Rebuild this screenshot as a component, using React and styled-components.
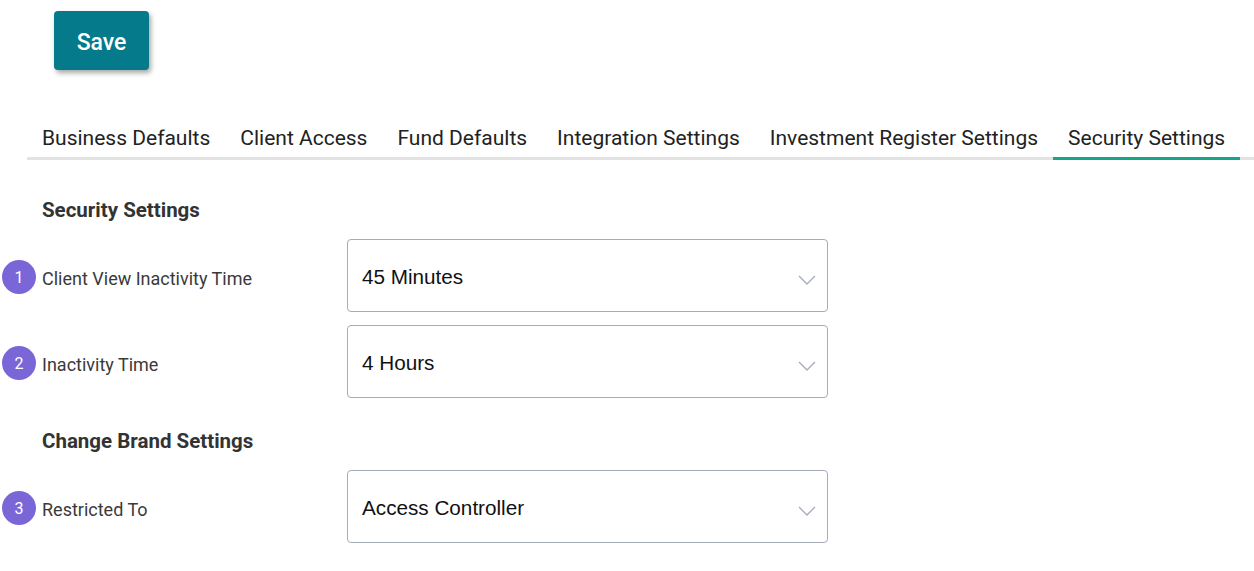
import React from "react"
import styled, { createGlobalStyle } from "styled-components"

const TABS = [
  "Business Defaults",
  "Client Access",
  "Fund Defaults",
  "Integration Settings",
  "Investment Register Settings",
  "Security Settings",
]

const GlobalStyle = createGlobalStyle`
  body {
    margin: 0;
    background: #fff;
    font-family: Roboto, "Noto Sans", sans-serif;
  }
`

const Page = styled.div`
  width: 1254px;
  height: 571px;
  overflow: hidden;
`

const Toolbar = styled.div`
  padding: 11px 0 0 54px;
`

const SaveButton = styled.button`
  width: 95px;
  height: 59px;
  padding: 4px 0 0;
  border: none;
  border-radius: 4px;
  background: #047a8b;
  color: #fff;
  font-family: Roboto, sans-serif;
  font-size: 23px;
  font-weight: 500;
  box-shadow: 2px 3px 5px rgba(0, 0, 0, 0.35);
  cursor: pointer;
`

const TabBar = styled.div`
  display: flex;
  margin: 46px 0 0 27px;
  border-bottom: 3px solid #e3e3e3;
`

const Tab = styled.div`
  padding: 10px 15px 7px;
  margin-bottom: -3px;
  font-size: 21px;
  line-height: 24px;
  color: #222;
  white-space: nowrap;
  border-bottom: 3px solid ${(p) => (p.$active ? "#17a488" : "transparent")};
`

const Section = styled.div`
  margin-top: ${(p) => p.$top}px;
`

const Heading = styled.h3`
  margin: 0 0 17px 42px;
  font-size: 20.5px;
  line-height: 24px;
  font-weight: 700;
  color: #333;
`

const Rows = styled.div`
  display: flex;
  flex-direction: column;
  gap: 13px;
`

const Row = styled.div`
  display: flex;
  align-items: center;
`

const Lead = styled.div`
  display: flex;
  align-items: center;
  width: 347px;
  padding-top: 5px;
`

const Badge = styled.span`
  flex: none;
  width: 34px;
  height: 34px;
  margin: -2px 6px 0 2px;
  border-radius: 50%;
  background: #7b66d7;
  color: #fff;
  font-size: 16px;
  display: flex;
  align-items: center;
  justify-content: center;
`

const Label = styled.span`
  font-size: 18px;
  color: #3a3a3a;
`

const Select = styled.div`
  width: 481px;
  height: 73px;
  box-sizing: border-box;
  border: 1px solid #a5abb8;
  border-radius: 4px;
  display: flex;
  align-items: center;
  justify-content: space-between;
  padding: 3px 11px 0 14px;
  font-family: "Liberation Sans", Arial, sans-serif;
  font-size: 20.7px;
  color: #111;
`

const Chevron = () => (
  <svg width="18" height="10" viewBox="0 0 18 10" style={{ marginTop: 6 }}>
    <path d="M1 1l8 8 8-8" fill="none" stroke="#a7aebb" strokeWidth="1.4" />
  </svg>
)

const Field = ({ n, label, value }) => (
  <Row>
    <Lead>
      <Badge>{n}</Badge>
      <Label>{label}</Label>
    </Lead>
    <Select>
      <span>{value}</span>
      <Chevron />
    </Select>
  </Row>
)

export default function App() {
  return (
    <Page>
      <GlobalStyle />
      <Toolbar>
        <SaveButton>Save</SaveButton>
      </Toolbar>
      <TabBar>
        {TABS.map((t) => (
          <Tab key={t} $active={t === "Security Settings"}>
            {t}
          </Tab>
        ))}
      </TabBar>
      <Section $top={38}>
        <Heading>Security Settings</Heading>
        <Rows>
          <Field n={1} label="Client View Inactivity Time" value="45 Minutes" />
          <Field n={2} label="Inactivity Time" value="4 Hours" />
        </Rows>
      </Section>
      <Section $top={31}>
        <Heading>Change Brand Settings</Heading>
        <Rows>
          <Field n={3} label="Restricted To" value="Access Controller" />
        </Rows>
      </Section>
    </Page>
  )
}
